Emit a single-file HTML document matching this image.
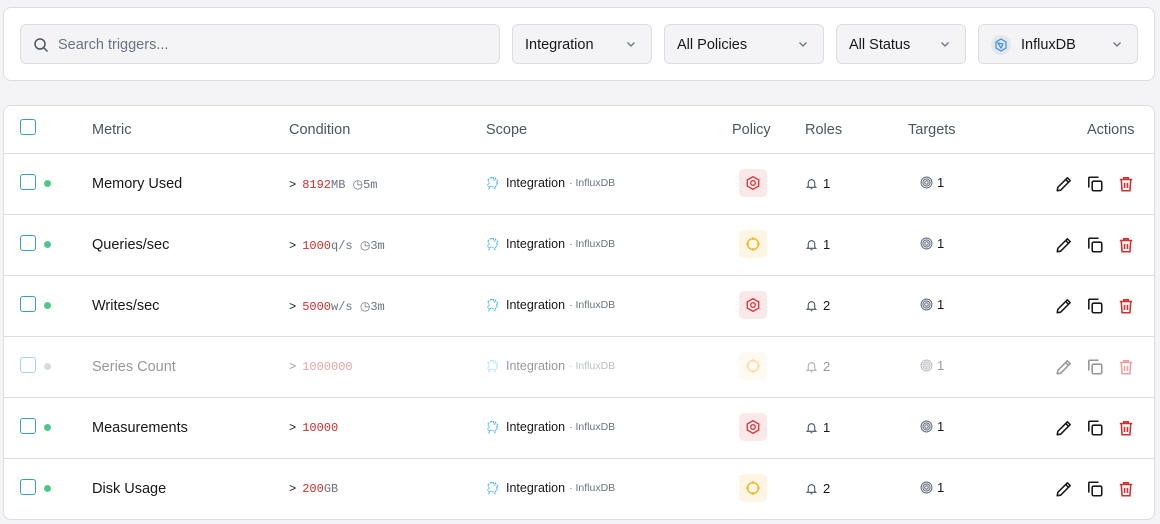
<!DOCTYPE html>
<html><head><meta charset="utf-8"><style>
*{box-sizing:border-box;margin:0;padding:0}
body{width:1160px;height:524px;background:#f4f4f6;font-family:"Liberation Sans",sans-serif;position:relative;overflow:hidden;color:#18181b}
.card{position:absolute;background:#fff;border:1px solid #dcdde2;border-radius:8px}
.inp{position:absolute;top:24px;height:40px;background:#f4f4f6;border:1px solid #dcdde2;border-radius:6px;font-size:14.5px;display:flex;align-items:center;padding-top:1px}
.sel{padding-left:12px;color:#18181b}
.sel .chev{position:absolute;right:14px;top:13px}
.row{position:absolute;left:4px;width:1151px;height:61px;border-top:1px solid #dcdde2}
.cb{position:absolute;width:16px;height:16px;border:1.5px solid #3b9fc4;border-radius:3px}
.dot{position:absolute;width:7px;height:7px;border-radius:50%;background:#4cc98a}
.metric{position:absolute;font-size:14.5px;color:#18181b}
.cond{position:absolute;font-family:"Liberation Mono",monospace;font-size:12px;color:#6b7280}
.cond .gt{color:#18181b;margin-right:6px}
.cond .v{color:#d42f2f}
.scope{position:absolute;font-size:12.5px;color:#18181b;display:flex;align-items:center}
.scope small{font-size:10.5px;color:#6b7280;margin-left:4px}
.pol{position:absolute;width:28px;height:28px;border-radius:5px;display:flex;align-items:center;justify-content:center}
.red{background:#fbe9e9}.yel{background:#fef6e2}
.roles{position:absolute;font-size:13px;display:flex;align-items:center;gap:5px}
.tg{position:absolute;font-size:13px;display:flex;align-items:center;gap:4px}
.act{position:absolute;display:flex;gap:13px}
.hd{position:absolute;top:122px;font-size:14.5px;color:#4b5563}
.dim{opacity:.45}
</style></head><body>
<div class="card" style="left:3px;top:7px;width:1152px;height:74px"></div>
<div class="inp" style="left:20px;width:480px;padding-left:12px;color:#6b7280">
<svg width="16" height="16" viewBox="0 0 16 16" fill="none" stroke="#4b5563" stroke-width="1.5"><circle cx="7" cy="7" r="5"/><path d="M11 11l3.5 3.5"/></svg>
<span style="margin-left:9px">Search triggers...</span></div>
<div class="inp sel" style="left:512px;width:140px">Integration<svg class="chev" width="12" height="12" viewBox="0 0 12 12" fill="none" stroke="#6b7280" stroke-width="1.3"><path d="M2.5 4.5l3.5 3.5 3.5-3.5"/></svg></div>
<div class="inp sel" style="left:664px;width:160px">All Policies<svg class="chev" width="12" height="12" viewBox="0 0 12 12" fill="none" stroke="#6b7280" stroke-width="1.3"><path d="M2.5 4.5l3.5 3.5 3.5-3.5"/></svg></div>
<div class="inp sel" style="left:836px;width:130px">All Status<svg class="chev" width="12" height="12" viewBox="0 0 12 12" fill="none" stroke="#6b7280" stroke-width="1.3"><path d="M2.5 4.5l3.5 3.5 3.5-3.5"/></svg></div>
<div class="inp sel" style="left:978px;width:160px"><span style="width:20px;height:20px;border-radius:50%;background:#e5e7eb;display:inline-flex;align-items:center;justify-content:center;margin-right:10px"><svg width="14" height="14" viewBox="0 0 14 14" fill="none" stroke="#3b8fe8" stroke-width="1.2"><path d="M7 1l5 3v6l-5 3-5-3V4z"/><path d="M4 5l5 1-2 4z"/></svg></span>InfluxDB<svg class="chev" width="12" height="12" viewBox="0 0 12 12" fill="none" stroke="#6b7280" stroke-width="1.3"><path d="M2.5 4.5l3.5 3.5 3.5-3.5"/></svg></div>

<div class="card" style="left:3px;top:105px;width:1152px;height:415px"></div>
<div class="cb" style="left:20px;top:119px"></div>
<div class="hd" style="left:92px">Metric</div>
<div class="hd" style="left:289px">Condition</div>
<div class="hd" style="left:486px">Scope</div>
<div class="hd" style="left:732px">Policy</div>
<div class="hd" style="left:805px">Roles</div>
<div class="hd" style="left:908px">Targets</div>
<div class="hd" style="left:1087px">Actions</div>

<svg width="0" height="0" style="position:absolute"><defs>
<symbol id="puz" viewBox="0 0 14 14"><path d="M5 1.5h2.5v2a1.2 1.2 0 0 0 2 0v-1l2.5 2.5-2 2h1a1.2 1.2 0 0 1 0 2h-1l-1 3.5-2.5-2a1.2 1.2 0 0 0-2 0L3 12.5v-2a1.2 1.2 0 0 1 0-2.5V5.5L1.5 4z" fill="none" stroke="#38b6e8" stroke-width="1" stroke-dasharray="1.6 .8"/></symbol>
<symbol id="bell" viewBox="0 0 12 12"><path d="M3 8.5V5.5a3 3 0 0 1 6 0v3l1 1H2z M5.2 10.8h1.6" fill="none" stroke="#4b5563" stroke-width="1"/></symbol>
<symbol id="tgt" viewBox="0 0 12 12"><g fill="none" stroke="#6b7280" stroke-width="1"><circle cx="6" cy="6" r="5"/><circle cx="6" cy="6" r="3.3"/><circle cx="6" cy="6" r="1.6"/></g></symbol>
<symbol id="hex" viewBox="0 0 14 14"><path d="M7 1.5l5 2.8v5.4L7 12.5 2 9.7V4.3z" fill="none" stroke="#dc3b3b" stroke-width="1.2"/><circle cx="7" cy="7" r="2" fill="none" stroke="#dc3b3b" stroke-width="1.2"/></symbol>
<symbol id="cir" viewBox="0 0 14 14"><g fill="none" stroke="#f0b429" stroke-width="1.2"><circle cx="7" cy="7" r="4.8"/><path d="M7 1v2.5M7 10.5V13M1 7h2.5M10.5 7H13"/></g></symbol>
<symbol id="pen" viewBox="0 0 16 16"><path d="M11 2.5l2.5 2.5L5 13.5l-3 .5.5-3z M9.5 4l2.5 2.5" fill="none" stroke="#18181b" stroke-width="1.4" stroke-linejoin="round"/></symbol>
<symbol id="cp" viewBox="0 0 16 16"><g fill="none" stroke="#18181b" stroke-width="1.4"><rect x="5.5" y="5.5" width="8.5" height="8.5" rx="1.3"/><path d="M3 10.5h-.5V2.8a.8.8 0 0 1 .8-.8H10.5V2.5"/></g></symbol>
<symbol id="tr" viewBox="0 0 16 16"><g fill="none" stroke="#d42f2f" stroke-width="1.4"><path d="M2.5 4h11M6 4V2.5h4V4M3.8 4l.7 10h7l.7-10M6.7 7v4.5M9.3 7v4.5"/></g></symbol>
</defs></svg>

<div id="rows"></div>
<script>
var d=[["Memory Used",'<span class="v">8192</span>MB <span style="font-family:Liberation Sans">&#9719;</span>5m',"hex","red","1",0],
["Queries/sec",'<span class="v">1000</span>q/s <span style="font-family:Liberation Sans">&#9719;</span>3m',"cir","yel","1",0],
["Writes/sec",'<span class="v">5000</span>w/s <span style="font-family:Liberation Sans">&#9719;</span>3m',"hex","red","2",0],
["Series Count",'<span class="v">1000000</span>',"cir","yel","2",1],
["Measurements",'<span class="v">10000</span>',"hex","red","1",0],
["Disk Usage",'<span class="v">200</span>GB',"cir","yel","2",0]];
var h="";
d.forEach(function(r,i){var t=153+i*61;var dm=r[5]?' dim':'';
h+='<div class="row" style="top:'+t+'px"></div>';
h+='<div class="cb'+dm+'" style="left:20px;top:'+(t+21)+'px"></div>';
h+='<div class="dot" style="left:44px;top:'+(t+27)+'px;'+(r[5]?'background:#d9dadf':'')+'"></div>';
h+='<div class="metric'+dm+'" style="left:92px;top:'+(t+23)+'px">'+r[0]+'</div>';
h+='<div class="cond'+dm+'" style="left:289px;top:'+(t+24)+'px"><span class="gt">&gt;</span>'+r[1]+'</div>';
h+='<div class="scope'+dm+'" style="left:486px;top:'+(t+23)+'px"><svg width="14" height="14"><use href="#puz"/></svg><span style="margin-left:6px">Integration</span><small>· InfluxDB</small></div>';
h+='<div class="pol '+r[3]+dm+'" style="left:739px;top:'+(t+16)+'px"><svg width="16" height="16"><use href="#'+r[2]+'"/></svg></div>';
h+='<div class="roles'+dm+'" style="left:805px;top:'+(t+23)+'px"><svg width="13" height="13"><use href="#bell"/></svg>'+r[4]+'</div>';
h+='<div class="tg'+dm+'" style="left:920px;top:'+(t+22)+'px"><svg width="13" height="13"><use href="#tgt"/></svg>1</div>';
h+='<div class="act'+dm+'" style="left:1055px;top:'+(t+22)+'px"><svg width="18" height="18"><use href="#pen"/></svg><svg width="18" height="18"><use href="#cp"/></svg><svg width="18" height="18"><use href="#tr"/></svg></div>';
});
document.getElementById("rows").innerHTML=h;
</script>
</body></html>
